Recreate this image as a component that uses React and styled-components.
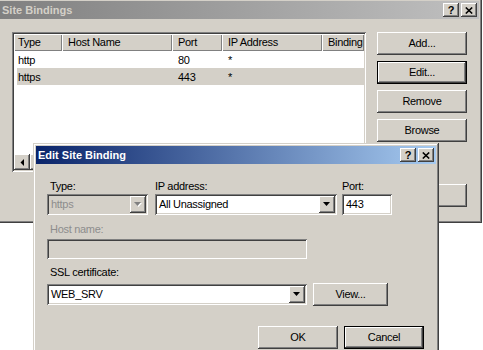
import styled, { createGlobalStyle } from "styled-components";

const GlobalStyle = createGlobalStyle`
  html, body {
    margin: 0;
    padding: 0;
    background: #fff;
    overflow: hidden;
  }
  body {
    font-family: "Liberation Sans", Arial, sans-serif;
    font-size: 11px;
    letter-spacing: -0.3px;
    color: #000;
  }
`;

const raised = `
  box-shadow: inset -1px -1px #404040, inset 1px 1px #fff,
    inset -2px -2px #808080, inset 2px 2px #d4d0c8;
`;

const sunken = `
  box-shadow: inset 1px 1px #808080, inset -1px -1px #fff,
    inset 2px 2px #404040, inset -2px -2px #d4d0c8;
`;

const Desktop = styled.div`
  position: relative;
  width: 483px;
  height: 350px;
  overflow: hidden;
  background: #fff;
`;

// windows sit on the desktop at their own coordinates
const Window = styled.div`
  position: absolute;
  left: ${(p) => p.$x}px;
  top: ${(p) => p.$y}px;
  width: ${(p) => p.$w}px;
  height: ${(p) => p.$h}px;
  box-sizing: border-box;
  padding: 3px;
  display: flex;
  flex-direction: column;
  background: #d4d0c8;
  box-shadow: inset -1px -1px #404040, inset 1px 1px #d4d0c8,
    inset -2px -2px #808080, inset 2px 2px #fff;
`;

const TitleBar = styled.div`
  height: 18px;
  flex-shrink: 0;
  display: flex;
  align-items: center;
  justify-content: space-between;
  padding: 0 2px;
  background: ${(p) =>
    p.$active
      ? "linear-gradient(to right, #0a246a, #a6caf0)"
      : "linear-gradient(to right, #808080, #c0c0c0)"};
  color: ${(p) => (p.$active ? "#fff" : "#d4d0c8")};
`;

const Title = styled.span`
  font-weight: bold;
  letter-spacing: 0;
  line-height: 18px;
`;

const CaptionButtons = styled.div`
  display: flex;
  gap: 2px;
`;

const CaptionButton = styled.span`
  width: 16px;
  height: 14px;
  display: flex;
  align-items: center;
  justify-content: center;
  background: #d4d0c8;
  color: #000;
  font-weight: bold;
  font-size: 11px;
  letter-spacing: 0;
  ${raised}
`;

const BindingsBody = styled.div`
  flex: 1;
  display: flex;
  gap: 11px;
  padding: 13px 12px;
`;

const ListView = styled.div`
  width: 354px;
  height: 140px;
  box-sizing: border-box;
  padding: 2px;
  display: flex;
  flex-direction: column;
  background: #fff;
  overflow: hidden;
  ${sunken}
`;

const Header = styled.div`
  display: grid;
  grid-template-columns: 48px 110px 50px 100px 42px;
  height: 17px;
  flex-shrink: 0;
`;

const HeaderCell = styled.span`
  padding-left: 6px;
  line-height: 17px;
  white-space: nowrap;
  overflow: hidden;
  background: #d4d0c8;
  box-shadow: inset 1px 1px #fff, inset -1px -1px #808080;
  &:first-child {
    padding-left: 4px;
  }
`;

const Rows = styled.div`
  flex: 1;
`;

const Row = styled.div`
  display: grid;
  grid-template-columns: 45px 110px 50px 100px 42px;
  height: 17px;
  margin-left: 3px;
  line-height: 18px;
  background: ${(p) => (p.$selected ? "#d4d0c8" : "transparent")};
`;

const Cell = styled.span`
  padding-left: 6px;
  white-space: nowrap;
  overflow: hidden;
  &:first-child {
    padding-left: 1px;
  }
`;

const HScroll = styled.div`
  height: 16px;
  flex-shrink: 0;
  display: flex;
  background: #ebe9e4;
`;

const ScrollArrow = styled.span`
  width: 16px;
  display: flex;
  align-items: center;
  justify-content: center;
  background: #d4d0c8;
  ${raised}
`;

const ScrollThumb = styled.span`
  width: 220px;
  background: #d4d0c8;
  ${raised}
`;

const SideButtons = styled.div`
  display: flex;
  flex-direction: column;
  gap: 6px;
`;

const Button = styled.button`
  box-sizing: border-box;
  width: ${(p) => p.$w}px;
  height: 23px;
  margin-top: ${(p) => (p.$push ? "auto" : "0")};
  padding: 0;
  border: 0;
  background: #d4d0c8;
  font: inherit;
  letter-spacing: inherit;
  color: #000;
  line-height: 23px;
  box-shadow: ${(p) =>
    p.$default
      ? "inset 0 0 0 1px #000, inset -2px -2px #404040, inset 2px 2px #fff, inset -3px -3px #808080"
      : "inset -1px -1px #404040, inset 1px 1px #fff, inset -2px -2px #808080, inset 2px 2px #d4d0c8"};
`;

const EditBody = styled.div`
  flex: 1;
  display: flex;
  flex-direction: column;
  padding: 16px 12px 0 11px;
`;

const FormRow = styled.div`
  display: flex;
  align-items: ${(p) => p.$align || "flex-start"};
  gap: ${(p) => p.$gap}px;
  margin-top: ${(p) => p.$top || 0}px;
`;

const FieldGroup = styled.div`
  display: flex;
  flex-direction: column;
  margin-top: ${(p) => p.$top || 0}px;
`;

const Label = styled.span`
  height: 13px;
  line-height: 13px;
  margin-bottom: ${(p) => p.$gap}px;
  padding-left: ${(p) => p.$indent || 0}px;
  color: ${(p) => (p.$disabled ? "#8d8d8d" : "#000")};
`;

const Combo = styled.div`
  box-sizing: border-box;
  width: ${(p) => p.$w}px;
  height: 21px;
  padding: 2px;
  display: flex;
  background: ${(p) => (p.$disabled ? "#d4d0c8" : "#fff")};
  ${sunken}
`;

const FieldText = styled.span`
  flex: 1;
  padding-left: 2px;
  line-height: 17px;
  white-space: nowrap;
  overflow: hidden;
  color: ${(p) => (p.$disabled ? "#8d8d8d" : "#000")};
`;

const DropButton = styled.span`
  width: 16px;
  display: flex;
  align-items: center;
  justify-content: center;
  background: #d4d0c8;
  ${raised}
`;

const TextBox = styled.div`
  box-sizing: border-box;
  width: ${(p) => p.$w}px;
  height: ${(p) => p.$h || 21}px;
  padding: 2px;
  display: flex;
  background: ${(p) => (p.$disabled ? "#d4d0c8" : "#fff")};
  ${sunken}
`;

const Footer = styled.div`
  display: flex;
  justify-content: flex-end;
  gap: 6px;
  margin-top: 20px;
`;

const CloseGlyph = () => (
  <svg width="8" height="7" viewBox="0 0 8 7">
    <path d="M0.8 0.5 L7.2 6.5 M7.2 0.5 L0.8 6.5" stroke="#000" strokeWidth="1.6" fill="none" />
  </svg>
);

const DownArrow = ({ disabled }) => (
  <svg width="8" height="5" viewBox="0 0 8 5">
    {disabled && <polygon points="1,1 8,1 4.5,5" fill="#fff" />}
    <polygon points="0,0 7,0 3.5,4" fill={disabled ? "#808080" : "#000"} />
  </svg>
);

const LeftArrow = () => (
  <svg width="4" height="7" viewBox="0 0 4 7">
    <polygon points="4,0 4,7 0.5,3.5" fill="#000" />
  </svg>
);

const Caption = ({ title, active }) => (
  <TitleBar $active={active}>
    <Title>{title}</Title>
    <CaptionButtons>
      <CaptionButton>?</CaptionButton>
      <CaptionButton>
        <CloseGlyph />
      </CaptionButton>
    </CaptionButtons>
  </TitleBar>
);

const bindings = [
  { type: "http", host: "", port: "80", ip: "*", info: "" },
  { type: "https", host: "", port: "443", ip: "*", info: "", selected: true },
];

const App = () => {
  return (
    <>
      <GlobalStyle />
      <Desktop>
        <Window $x={-3} $y={-2} $w={485} $h={225}>
          <Caption title="Site Bindings" />
          <BindingsBody>
            <ListView>
              <Header>
                <HeaderCell>Type</HeaderCell>
                <HeaderCell>Host Name</HeaderCell>
                <HeaderCell>Port</HeaderCell>
                <HeaderCell>IP Address</HeaderCell>
                <HeaderCell>Binding</HeaderCell>
              </Header>
              <Rows>
                {bindings.map((b) => (
                  <Row key={b.type} $selected={b.selected}>
                    <Cell>{b.type}</Cell>
                    <Cell>{b.host}</Cell>
                    <Cell>{b.port}</Cell>
                    <Cell>{b.ip}</Cell>
                    <Cell>{b.info}</Cell>
                  </Row>
                ))}
              </Rows>
              <HScroll>
                <ScrollArrow>
                  <LeftArrow />
                </ScrollArrow>
                <ScrollThumb />
              </HScroll>
            </ListView>
            <SideButtons>
              <Button $w={90}>Add...</Button>
              <Button $w={90} $default>
                Edit...
              </Button>
              <Button $w={90}>Remove</Button>
              <Button $w={90}>Browse</Button>
              <Button $w={90} $push>
                Close
              </Button>
            </SideButtons>
          </BindingsBody>
        </Window>

        <Window $x={33} $y={143} $w={406} $h={220}>
          <Caption title="Edit Site Binding" active />
          <EditBody>
            <FormRow $gap={7}>
              <FieldGroup>
                <Label $gap={1} $indent={3}>
                  Type:
                </Label>
                <Combo $w={101} $disabled>
                  <FieldText $disabled>https</FieldText>
                  <DropButton>
                    <DownArrow disabled />
                  </DropButton>
                </Combo>
              </FieldGroup>
              <FormRow $gap={5}>
                <FieldGroup>
                  <Label $gap={1}>IP address:</Label>
                  <Combo $w={182}>
                    <FieldText>All Unassigned</FieldText>
                    <DropButton>
                      <DownArrow />
                    </DropButton>
                  </Combo>
                </FieldGroup>
                <FieldGroup>
                  <Label $gap={1}>Port:</Label>
                  <TextBox $w={50}>
                    <FieldText>443</FieldText>
                  </TextBox>
                </FieldGroup>
              </FormRow>
            </FormRow>

            <FieldGroup $top={8}>
              <Label $gap={3} $indent={3} $disabled>
                Host name:
              </Label>
              <TextBox $w={260} $h={20} $disabled />
            </FieldGroup>

            <FieldGroup $top={7}>
              <Label $gap={4} $indent={3}>
                SSL certificate:
              </Label>
              <FormRow $gap={6} $align="center">
                <Combo $w={260}>
                  <FieldText>WEB_SRV</FieldText>
                  <DropButton>
                    <DownArrow />
                  </DropButton>
                </Combo>
                <Button $w={75}>View...</Button>
              </FormRow>
            </FieldGroup>

            <Footer>
              <Button $w={80}>OK</Button>
              <Button $w={80} $default>
                Cancel
              </Button>
            </Footer>
          </EditBody>
        </Window>
      </Desktop>
    </>
  );
};

export default App;
